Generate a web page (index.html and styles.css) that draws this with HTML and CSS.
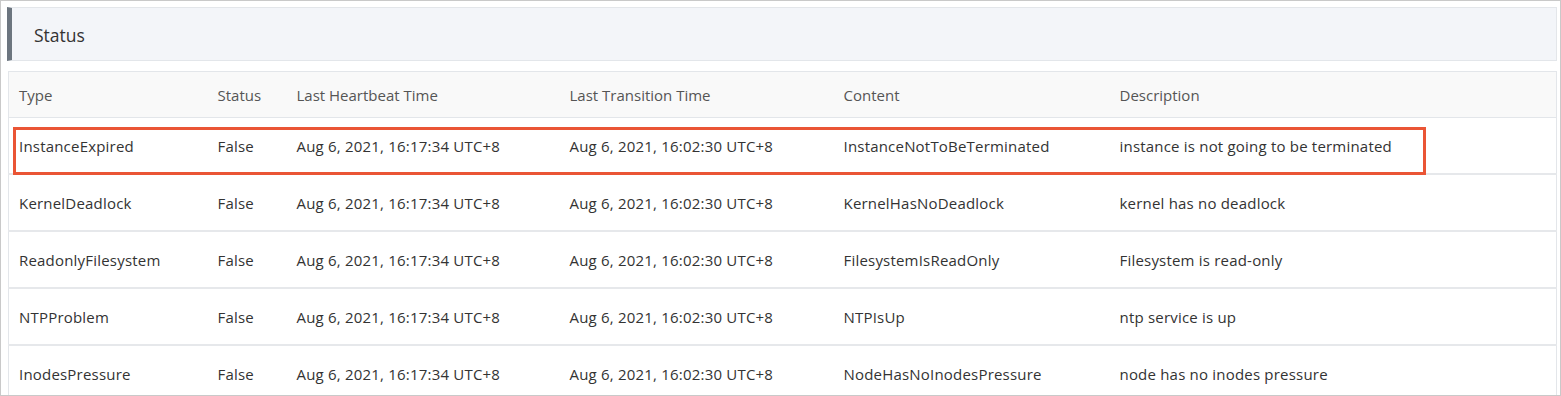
FILE: index.html
```html
<!DOCTYPE html>
<html lang="en">

<head>
  <meta charset="UTF-8" />
  <title>Node Status</title>
  <link rel="stylesheet" href="styles.css">
</head>

<body>
  <div class="frame">
    <div class="panel-title">Status</div>

    <table class="status-table">
      <colgroup>
        <col style="width: 199px">
        <col style="width: 79px">
        <col style="width: 273px">
        <col style="width: 274px">
        <col style="width: 276px">
        <col>
      </colgroup>
      <thead>
        <tr>
          <th>Type</th>
          <th>Status</th>
          <th>Last Heartbeat Time</th>
          <th>Last Transition Time</th>
          <th>Content</th>
          <th>Description</th>
        </tr>
      </thead>
      <tbody>
        <tr class="marked">
          <td>InstanceExpired</td>
          <td>False</td>
          <td>Aug 6, 2021, 16:17:34 UTC+8</td>
          <td>Aug 6, 2021, 16:02:30 UTC+8</td>
          <td>InstanceNotToBeTerminated</td>
          <td>instance is not going to be terminated</td>
        </tr>
        <tr>
          <td>KernelDeadlock</td>
          <td>False</td>
          <td>Aug 6, 2021, 16:17:34 UTC+8</td>
          <td>Aug 6, 2021, 16:02:30 UTC+8</td>
          <td>KernelHasNoDeadlock</td>
          <td>kernel has no deadlock</td>
        </tr>
        <tr>
          <td>ReadonlyFilesystem</td>
          <td>False</td>
          <td>Aug 6, 2021, 16:17:34 UTC+8</td>
          <td>Aug 6, 2021, 16:02:30 UTC+8</td>
          <td>FilesystemIsReadOnly</td>
          <td>Filesystem is read-only</td>
        </tr>
        <tr>
          <td>NTPProblem</td>
          <td>False</td>
          <td>Aug 6, 2021, 16:17:34 UTC+8</td>
          <td>Aug 6, 2021, 16:02:30 UTC+8</td>
          <td>NTPIsUp</td>
          <td>ntp service is up</td>
        </tr>
        <tr>
          <td>InodesPressure</td>
          <td>False</td>
          <td>Aug 6, 2021, 16:17:34 UTC+8</td>
          <td>Aug 6, 2021, 16:02:30 UTC+8</td>
          <td>NodeHasNoInodesPressure</td>
          <td>node has no inodes pressure</td>
        </tr>
      </tbody>
    </table>
  </div>
</body>

</html>
```

FILE: styles.css
```css
body {
  margin: 0;
  font-family: 'Open Sans', 'Noto Sans', sans-serif;
  background: #fff;
}

.frame {
  height: 396px;
  box-sizing: border-box;
  border: 1px solid #c9c9c9;
  padding: 6px 3px 0 6px;
  overflow: hidden;
}

.panel-title {
  height: 52px;
  line-height: 54px;
  background: #f3f5f9;
  border: 1px solid #e3e6ea;
  border-left: 5px solid #6c757f;
  padding-left: 22px;
  font-size: 17.5px;
  color: #333;
}

.status-table {
  margin: 10px 0 0 1px;
  width: calc(100% - 1px);
  border-collapse: collapse;
  table-layout: fixed;
  border: 1px solid #e3e6ea;
  font-size: 15px;
  color: #333;
}

.status-table th {
  height: 45px;
  background: #f9f9f9;
  font-weight: normal;
  color: #555;
  text-align: left;
  padding: 0 0 0 10px;
  border-bottom: 1px solid #e3e6ea;
}

.status-table td {
  height: 55px;
  padding: 0 0 0 10px;
  border-bottom: 2px solid #e6e8eb;
  white-space: nowrap;
  letter-spacing: 0.2px;
}

.status-table tr.marked td {
  position: relative;
}

/* red highlight box drawn over the first row */
.status-table tr.marked td:first-child::after {
  content: "";
  position: absolute;
  left: 4px;
  top: 9px;
  width: 1413px;
  height: 48px;
  box-sizing: border-box;
  border: 3px solid #ea5535;
  pointer-events: none;
}
```
